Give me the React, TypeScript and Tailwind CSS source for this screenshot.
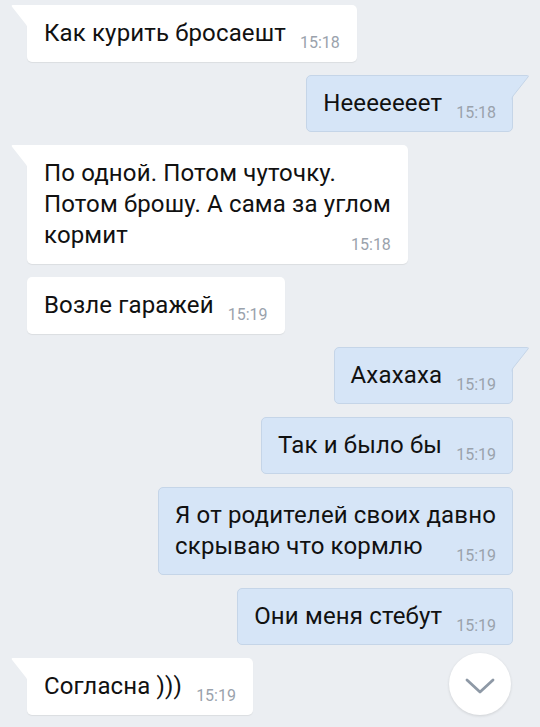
type Msg = { out: boolean; tail: boolean; lines: string[]; time: string };

const messages: Msg[] = [
  { out: false, tail: true, lines: ["Как курить бросаешт"], time: "15:18" },
  { out: true, tail: true, lines: ["Нееееееет"], time: "15:18" },
  {
    out: false,
    tail: true,
    lines: ["По одной. Потом чуточку.", "Потом брошу. А сама за углом", "кормит"],
    time: "15:18",
  },
  { out: false, tail: false, lines: ["Возле гаражей"], time: "15:19" },
  { out: true, tail: true, lines: ["Ахахаха"], time: "15:19" },
  { out: true, tail: false, lines: ["Так и было бы"], time: "15:19" },
  { out: true, tail: false, lines: ["Я от родителей своих давно", "скрываю что кормлю"], time: "15:19" },
  { out: true, tail: false, lines: ["Они меня стебут"], time: "15:19" },
  { out: false, tail: true, lines: ["Согласна )))"], time: "15:19" },
];

function Tail({ out }: { out: boolean }) {
  if (out) {
    return (
      <svg
        className="absolute -right-[17px] -top-px"
        width="18"
        height="25"
        viewBox="0 0 18 25"
      >
        <path d="M0 1 H16.5 Q17.5 1 17 2 L2 21 Q1 22.5 1 24 V1 Z" fill="#d6e5f7" />
        <path d="M0 0.5 H16.5 Q18 0.5 17 2 L2 21 Q1 22.5 1 24.5" fill="none" stroke="#c5d5e8" />
      </svg>
    );
  }
  return (
    <svg className="absolute -left-[16px] top-0" width="17" height="24" viewBox="0 0 17 24">
      <path d="M1.5 0 H17 V23.5 Q16 21 15 19.5 L0.8 1.6 Q0.2 0 1.5 0 Z" fill="#ffffff" />
    </svg>
  );
}

function Bubble({ m }: { m: Msg }) {
  const body = m.lines.slice(0, -1);
  const last = m.lines[m.lines.length - 1];
  return (
    <div
      className={
        m.out
          ? "relative self-end rounded-[5px] border border-[#c5d5e8] bg-[#d6e5f7] px-[16px] py-[12px]" +
            (m.tail ? " rounded-tr-none" : "")
          : "relative self-start rounded-[5px] bg-white px-[17px] py-[13px] shadow-[0_1px_1px_rgba(0,0,0,0.07)]" +
            (m.tail ? " rounded-tl-none" : "")
      }
    >
      {m.tail && <Tail out={m.out} />}
      <div className="text-[24px] leading-[31px] tracking-[0.15px] text-[#111]">
        {body.map((l) => (
          <div key={l}>{l}</div>
        ))}
        <div className="flex items-end justify-between gap-[14px]">
          <span>{last}</span>
          <span className="text-[16px] leading-[12px] tracking-normal text-[#9aa2ac]">{m.time}</span>
        </div>
      </div>
    </div>
  );
}

export default function App() {
  return (
    <div
      className="relative h-[727px] w-[540px] overflow-hidden bg-[#ebeef2]"
      style={{ fontFamily: "Roboto, 'Noto Sans', sans-serif" }}
    >
      <div className="flex flex-col gap-[13px] px-[27px] pt-[5px]">
        {messages.map((m, i) => (
          <Bubble key={i} m={m} />
        ))}
      </div>
      <button className="absolute bottom-[12px] right-[29px] flex h-[62px] w-[62px] items-center justify-center rounded-full bg-white pt-[4px] shadow-[0_1px_3px_rgba(0,0,0,0.12)]">
        <svg width="30" height="18" viewBox="0 0 30 18">
          <path d="M2 3 L15 15 L28 3" fill="none" stroke="#8e99a6" strokeWidth="2.8" strokeLinecap="round" strokeLinejoin="round" />
        </svg>
      </button>
    </div>
  );
}
